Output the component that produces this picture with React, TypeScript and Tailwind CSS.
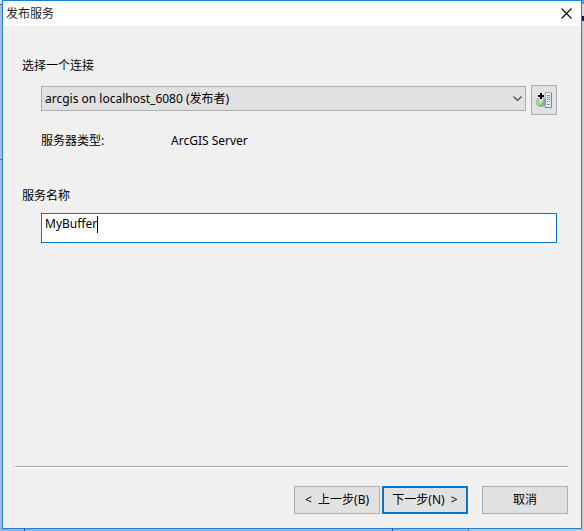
import { useState } from "react";

function CloseIcon() {
  return (
    <svg width="11" height="11" viewBox="0 0 11 11" aria-hidden="true">
      <path d="M0.5 0.5 L10.5 10.5 M10.5 0.5 L0.5 10.5" stroke="#000" strokeWidth="1.1" fill="none" />
    </svg>
  );
}

function AddServerIcon() {
  return (
    <svg width="16" height="17" viewBox="0 0 16 17" className="shrink-0" aria-hidden="true">
      <defs>
        <radialGradient id="globe" cx="45%" cy="45%" r="60%">
          <stop offset="0" stopColor="#d9f0fb" />
          <stop offset="0.5" stopColor="#8cc4e6" />
          <stop offset="1" stopColor="#4c8cba" />
        </radialGradient>
        <linearGradient id="server" x1="0" x2="1" y1="0" y2="0">
          <stop offset="0" stopColor="#a9adcb" />
          <stop offset="0.3" stopColor="#f4f5fb" />
          <stop offset="1" stopColor="#dfe2f0" />
        </linearGradient>
      </defs>
      {/* server tower */}
      <path d="M9 0.5 H15.5 V15.5 H9 Z" fill="url(#server)" stroke="#a3a7c4" />
      <path d="M15.5 1 V15.5 H9" fill="none" stroke="#7c80a6" />
      <path d="M11 3.5 H14 M11 5.5 H14 M11 7.5 H14 M11 12.5 H14" stroke="#8c90ac" />
      <path d="M11 9.5 H12 M13 9.5 H14" stroke="#3b9a52" />
      {/* globe */}
      <circle cx="5" cy="10" r="5" fill="url(#globe)" />
      <path d="M0.3 8.5 Q2 5.5 4 8.5 Q4.5 11 2.5 13.5 Q0 12 0.3 8.5 Z" fill="#c3cf5c" />
      <path d="M6 10 Q8.5 8.5 9.6 10.5 Q9 13.5 6.5 14.5 Q5 12.5 6 10 Z" fill="#8fb545" />
      {/* plus sign */}
      <path d="M5 0 V8 M1 4 H9" stroke="#fff" strokeWidth="4" opacity="0.4" />
      <path d="M5 1 V7 M2 4 H8" stroke="#000" strokeWidth="2" />
    </svg>
  );
}

const buttonClass =
  "h-7 w-[86px] bg-[#e1e1e1] border border-[#adadad] whitespace-pre hover:border-[#0078d7]";

export default function App() {
  const [name, setName] = useState("MyBuffer");

  return (
    <div className="flex min-h-screen flex-col bg-[#9fb0c8] font-['Noto_Sans','Noto_Sans_CJK_SC',sans-serif] text-xs text-black">
      <div className="flex flex-1">
        {/* strip of the window behind, left side */}
        <div className="flex w-[2px] flex-col bg-[#a9bad6]">
          <div className="h-1 bg-[#d5dce8]" />
          <div className="h-px bg-[#5d6675]" />
          <div className="h-[154px]" />
          <div className="h-px bg-[#5d6675]" />
        </div>

        <main className="flex flex-1 flex-col border border-[#1883d7] bg-[#f0f0f0]">
          <header className="flex h-[25px] items-center justify-between bg-white pl-[3px] pr-[9px]">
            <h1 className="text-[#222]">发布服务</h1>
            <button aria-label="关闭">
              <CloseIcon />
            </button>
          </header>

          <form className="flex flex-1 flex-col" onSubmit={(e) => e.preventDefault()}>
            <div className="flex flex-1 flex-col pl-[19px] pr-6 pt-8">
              <label htmlFor="connection" className="leading-4">
                选择一个连接
              </label>
              <div className="mt-[11px] flex items-start gap-[5px] pl-[19px]">
                <div className="relative mt-px flex-1">
                  <select
                    id="connection"
                    className="block h-[25px] w-full appearance-none border border-[#adadad] bg-[#e1e1e1] pl-[3px] pr-5"
                  >
                    <option>arcgis on localhost_6080 (发布者)</option>
                  </select>
                  <svg
                    className="pointer-events-none absolute right-1 top-[10px]"
                    width="9"
                    height="6"
                    viewBox="0 0 9 6"
                    aria-hidden="true"
                  >
                    <path d="M0.5 0.5 L4.5 4.5 L8.5 0.5" fill="none" stroke="#444" strokeWidth="1.1" />
                  </svg>
                </div>
                <button
                  type="button"
                  aria-label="添加连接"
                  className="flex h-[30px] w-[26px] items-center justify-center border border-[#adadad] bg-[#e1e1e1]"
                >
                  <AddServerIcon />
                </button>
              </div>

              <dl className="mt-[18px] flex pl-[19px] leading-4">
                <dt className="w-[130px]">服务器类型:</dt>
                <dd>ArcGIS Server</dd>
              </dl>

              <label htmlFor="service" className="mt-[39px] leading-4">
                服务名称
              </label>
              <div className="ml-[19px] mt-[9px] flex h-[30px] items-start border border-[#0078d7] bg-white pl-[3px] pt-[2px]">
                <input
                  id="service"
                  value={name}
                  onChange={(e) => setName(e.target.value)}
                  className="h-4 field-sizing-content caret-transparent outline-none"
                />
                <span className="h-[17px] w-px bg-black" />
              </div>
            </div>

            <hr className="ml-3 mr-[13px] h-[2px] border-b border-t border-b-white border-t-[#a0a0a0]" />

            <footer className="flex justify-end pb-[14px] pr-[13px] pt-[18px]">
              <button type="button" className={buttonClass}>
                {"<  上一步(B)"}
              </button>
              <button
                type="submit"
                className="ml-[2px] h-7 w-[86px] whitespace-pre border-2 border-[#0078d7] bg-[#e1e1e1]"
              >
                {"下一步(N)  >"}
              </button>
              <button type="button" className={`${buttonClass} ml-[14px]`}>
                取消
              </button>
            </footer>
          </form>
        </main>

        {/* right side */}
        <div className="flex w-[2px] flex-col bg-[#cfcfcf]">
          <div className="h-1 bg-[#4aa0ea]" />
          <div className="h-3 bg-[#d8d8d8]" />
          <div className="h-[5px] bg-[#0a1a6b]" />
        </div>
      </div>

      {/* bottom edge */}
      <div className="flex h-[2px]">
        <div className="w-6" />
        <div className="w-px bg-[#3f4650]" />
        <div className="flex-1" />
        <div className="w-px bg-[#3f4650]" />
        <div className="w-[75px]" />
        <div className="w-px bg-[#6b6b6b]" />
        <div className="w-[115px] bg-[#c4c4c4]" />
      </div>
    </div>
  );
}
